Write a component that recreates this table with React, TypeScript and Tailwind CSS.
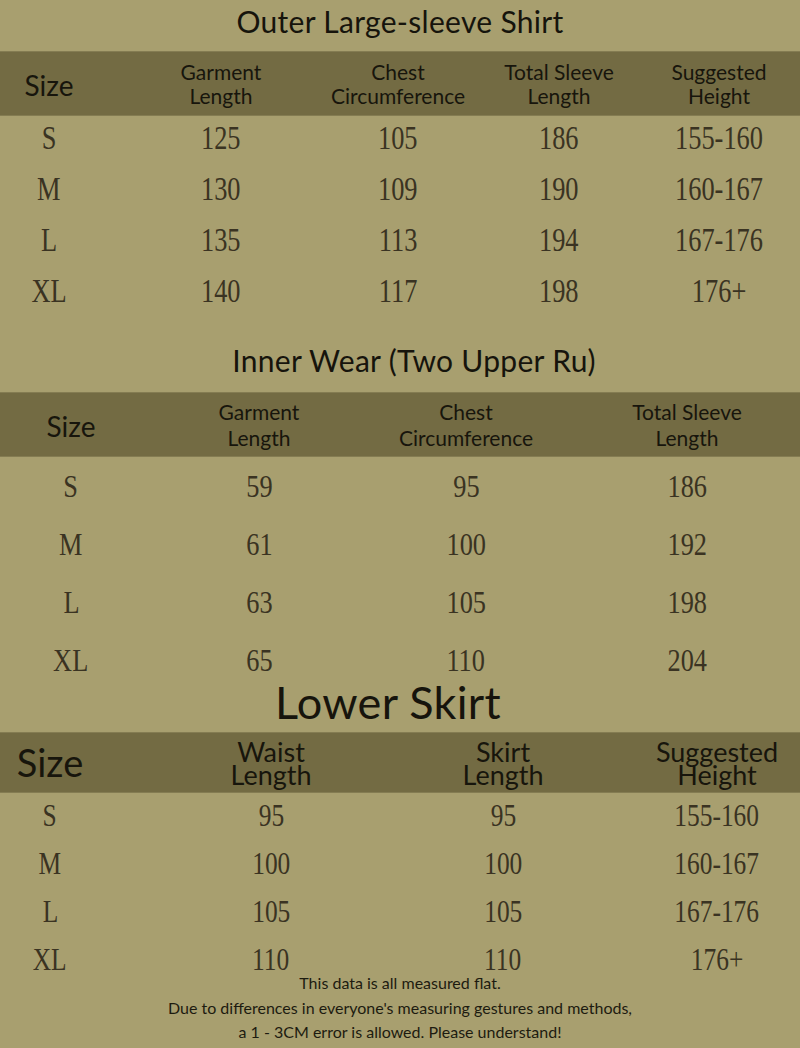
import React from 'react';

const sans = "font-['Lato','Noto_Sans',sans-serif]";
const serif = "font-['Liberation_Serif','Times_New_Roman',serif]";

type Table = {
  title: string;
  titleClass: string;
  cols: string;
  bandClass: string;
  headClass: string;
  headers: string[][];
  rowClass: string;
  numClass: string;
  rows: string[][];
};

const tables: Table[] = [
  {
    title: 'Outer Large-sleeve Shirt',
    titleClass: 'h-[51px] text-[30px] pt-[6px]',
    cols: 'grid-cols-[98px_246px_108px_214px_106px]',
    bandClass: 'h-[65px]',
    headClass: 'text-[21px] leading-[24px]',
    headers: [['Size'], ['Garment', 'Length'], ['Chest', 'Circumference'], ['Total Sleeve', 'Length'], ['Suggested', 'Height']],
    rowClass: 'h-[51px] pb-[6px]',
    numClass: 'text-[33px] scale-x-[0.8]',
    rows: [
      ['S', '125', '105', '186', '155-160'],
      ['M', '130', '109', '190', '160-167'],
      ['L', '135', '113', '194', '167-176'],
      ['XL', '140', '117', '198', '176+'],
    ],
  },
  {
    title: 'Inner Wear (Two Upper Ru)',
    titleClass: 'h-[72px] text-[30px] pt-[25px] pl-[28px]',
    cols: 'grid-cols-[142px_234px_180px_262px]',
    bandClass: 'h-[65px]',
    headClass: 'text-[21px] leading-[26px]',
    headers: [['Size'], ['Garment', 'Length'], ['Chest', 'Circumference'], ['Total Sleeve', 'Length']],
    rowClass: 'h-[58px]',
    numClass: 'text-[31px] scale-x-[0.85]',
    rows: [
      ['S', '59', '95', '186'],
      ['M', '61', '100', '192'],
      ['L', '63', '105', '198'],
      ['XL', '65', '110', '204'],
    ],
  },
  {
    title: 'Lower Skirt',
    titleClass: 'h-[43px] text-[45px] items-center pb-[16px] pr-[24px]',
    cols: 'grid-cols-[100px_342px_122px_306px]',
    bandClass: 'h-[61px]',
    headClass: 'text-[27px] leading-[23px]',
    headers: [['Size'], ['Waist', 'Length'], ['Skirt', 'Length'], ['Suggested', 'Height']],
    rowClass: 'h-[48px] pb-[4px]',
    numClass: 'text-[31px] scale-x-[0.82]',
    rows: [
      ['S', '95', '95', '155-160'],
      ['M', '100', '100', '160-167'],
      ['L', '105', '105', '167-176'],
      ['XL', '110', '110', '176+'],
    ],
  },
];

const SizeTable = ({ t, index }: { t: Table; index: number }) => (
  <section>
    <div className={`flex justify-center ${sans} text-[#16140c] ${t.titleClass}`}>
      <h2 className="leading-none tracking-[0.3px] whitespace-nowrap">{t.title}</h2>
    </div>
    <div className={`grid ${t.cols} ${t.bandClass} bg-[#736b43] border-y border-[#847c52] overflow-hidden`}>
      {t.headers.map((h, i) => (
        <div key={i} className={`flex flex-col items-center justify-center ${sans} text-[#17150c] ${i === 0 ? (index === 2 ? 'text-[38px] leading-none pb-[2px]' : 'text-[28px] leading-none pt-[2px]') : t.headClass}`}>
          {h.map((line) => (
            <span key={line} className="whitespace-nowrap">{line}</span>
          ))}
        </div>
      ))}
    </div>
    <div className="overflow-hidden">
      {t.rows.map((r, ri) => (
        <div key={ri} className={`grid ${t.cols} ${t.rowClass}`}>
          {r.map((v, ci) => (
            <div key={ci} className="flex items-center justify-center">
              <span className={`inline-block whitespace-nowrap leading-none ${serif} text-[#3a3322] ${t.numClass}`}>{v}</span>
            </div>
          ))}
        </div>
      ))}
    </div>
  </section>
);

export default function App() {
  return (
    <div className="w-[800px] h-[1048px] bg-[#a89f6f] overflow-hidden">
      {tables.map((t, i) => (
        <SizeTable key={t.title} t={t} index={i} />
      ))}
      <div className={`-mt-[14px] flex flex-col items-center ${sans} text-[16px] leading-[24.5px] text-[#1d1b10]`}>
        <p>This data is all measured flat.</p>
        <p>Due to differences in everyone's measuring gestures and methods,</p>
        <p>a 1 - 3CM error is allowed. Please understand!</p>
      </div>
    </div>
  );
}
